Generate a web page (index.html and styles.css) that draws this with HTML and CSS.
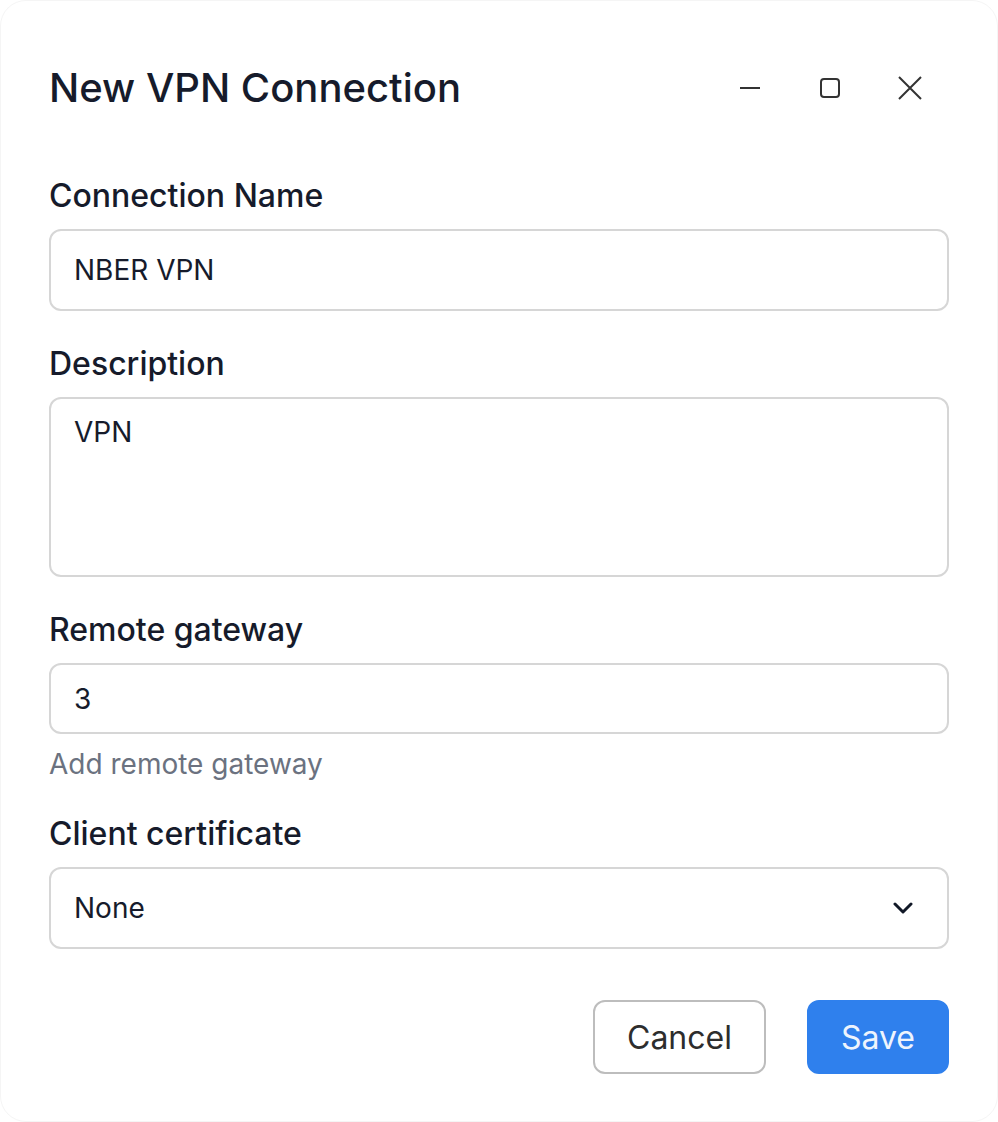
FILE: index.html
```html
<!DOCTYPE html>
<html lang="en">
<head>
<meta charset="utf-8">
<title>New VPN Connection</title>
<link rel="stylesheet" href="styles.css">
</head>
<body>
<div class="dialog">
  <div class="header">
    <h1 class="title">New VPN Connection</h1>
    <div class="window-controls">
      <span class="ctl">
        <svg width="24" height="24" viewBox="0 0 24 24"><path d="M2 12H22" stroke="#333" stroke-width="2" fill="none"/></svg>
      </span>
      <span class="ctl">
        <svg width="24" height="24" viewBox="0 0 24 24"><rect x="3" y="3" width="18" height="18" rx="3" stroke="#333" stroke-width="2" fill="none"/></svg>
      </span>
      <span class="ctl">
        <svg width="26" height="26" viewBox="0 0 26 26"><path d="M2 2L24 24M24 2L2 24" stroke="#333" stroke-width="2" fill="none"/></svg>
      </span>
    </div>
  </div>

  <div class="field field-first">
    <label class="label">Connection Name</label>
    <div class="input tall">NBER VPN</div>
  </div>

  <div class="field">
    <label class="label">Description</label>
    <div class="input textarea">VPN</div>
  </div>

  <div class="field">
    <label class="label">Remote gateway</label>
    <div class="input short">3</div>
    <div class="helper">Add remote gateway</div>
  </div>

  <div class="field">
    <label class="label">Client certificate</label>
    <div class="input tall select">
      <span>None</span>
      <svg class="chevron" width="20" height="12" viewBox="0 0 20 12"><path d="M2 2L10 10L18 2" stroke="#111827" stroke-width="3" fill="none" stroke-linecap="round" stroke-linejoin="round"/></svg>
    </div>
  </div>

  <div class="actions">
    <button class="btn btn-cancel">Cancel</button>
    <button class="btn btn-save">Save</button>
  </div>
</div>
</body>
</html>
```

FILE: styles.css
```css
html, body {
  margin: 0;
  padding: 0;
  background: #ffffff;
}

body {
  font-family: "Inter", "Noto Sans", sans-serif;
  color: #111827;
}

.dialog {
  box-sizing: border-box;
  width: 998px;
  height: 1122px;
  border: 1px solid #f5f5f5;
  border-radius: 26px;
  background: #ffffff;
  padding: 55px 48px 0 48px;
  display: flex;
  flex-direction: column;
}

.header {
  display: flex;
  align-items: center;
  justify-content: space-between;
  height: 64px;
}

.title {
  margin: 0;
  font-size: 40px;
  font-weight: 500;
  line-height: 64px;
  color: #161b2b;
}

.window-controls {
  display: flex;
  align-items: center;
  gap: 40px;
  padding-right: 19px;
}

.ctl {
  width: 40px;
  height: 40px;
  display: flex;
  align-items: center;
  justify-content: center;
}

.field {
  display: flex;
  flex-direction: column;
  margin-top: 33px;
}

.field.field-first {
  margin-top: 56px;
}

.label {
  font-size: 32px;
  font-weight: 500;
  line-height: 40px;
  color: #161b2b;
  margin-bottom: 13px;
}

.input {
  box-sizing: border-box;
  border: 2px solid #d6d6d6;
  border-radius: 12px;
  padding: 0 23px;
  font-size: 28px;
  line-height: 34px;
  color: #161b2b;
  display: flex;
  align-items: center;
}

.input.tall {
  height: 82px;
}

.input.short {
  height: 71px;
}

.input.textarea {
  height: 180px;
  align-items: flex-start;
  padding-top: 16px;
}

.input.select {
  justify-content: space-between;
  padding-right: 34px;
}

.chevron {
  display: block;
}

.helper {
  margin-top: 13px;
  font-size: 28px;
  line-height: 34px;
  color: #6b7280;
}

.actions {
  display: flex;
  justify-content: flex-end;
  gap: 41px;
  margin-top: 51px;
}

.btn {
  box-sizing: border-box;
  height: 74px;
  border-radius: 12px;
  font-family: "Inter", "Noto Sans", sans-serif;
  font-size: 32px;
  font-weight: 400;
  cursor: pointer;
}

.btn-cancel {
  background: #ffffff;
  border: 2px solid #bdbdbd;
  color: #2d2d2d;
  padding: 0 32px;
}

.btn-save {
  background: #2f80ed;
  border: 2px solid #2f80ed;
  color: #eef4fd;
  padding: 0 32px;
}
```
